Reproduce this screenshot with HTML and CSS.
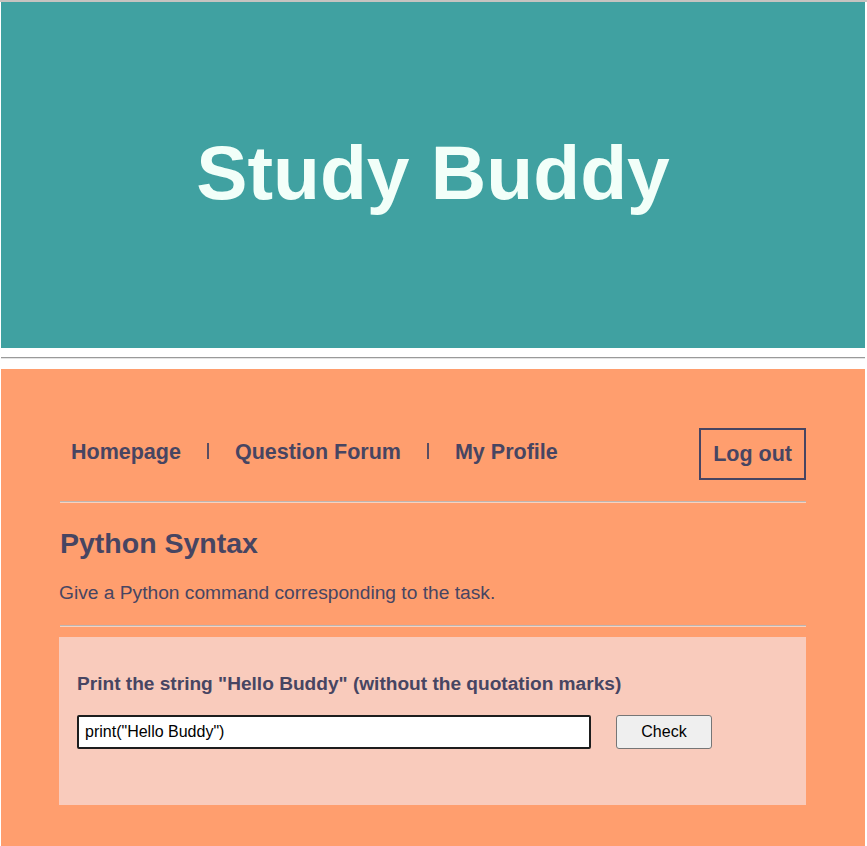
FILE: index.html
```html
<!DOCTYPE html>
<html lang="en">
<head>
<meta charset="utf-8">
<title>Study Buddy</title>
<link rel="stylesheet" href="styles.css">
</head>
<body>
<div class="frame">
  <header class="hero">
    <h1 class="hero-title">Study Buddy</h1>
  </header>
  <hr class="divider">
  <main class="panel">
    <nav class="nav">
      <ul class="links">
        <li><a class="link" href="#">Homepage</a></li>
        <li class="sep" aria-hidden="true"></li>
        <li><a class="link" href="#">Question Forum</a></li>
        <li class="sep" aria-hidden="true"></li>
        <li><a class="link" href="#">My Profile</a></li>
      </ul>
      <button class="logout" type="button">Log out</button>
    </nav>
    <hr class="rule rule-nav">
    <h2 class="title">Python Syntax</h2>
    <p class="intro">Give a Python command corresponding to the task.</p>
    <hr class="rule rule-intro">
    <section class="task">
      <p class="question">Print the string "Hello Buddy" (without the quotation marks)</p>
      <div class="answer">
        <input class="answer-input" type="text" value='print("Hello Buddy")'>
        <button class="check" type="button">Check</button>
      </div>
    </section>
  </main>
</div>
</body>
</html>
```

FILE: styles.css
```css
html, body {
  margin: 0;
  padding: 0;
  background: #ffffff;
}

body {
  font-family: "Liberation Sans", Arial, sans-serif;
  color: #474562;
}

.frame {
  border-top: 2px solid #c6c3c0;
  padding: 0 2px 0 1px;
  min-height: 844px;
  display: flex;
  flex-direction: column;
}

.hero {
  background: #40a1a1;
  height: 346px;
  display: flex;
  align-items: center;
  justify-content: center;
}

.hero-title {
  margin: 0;
  font-size: 76.8px;
  font-weight: 700;
  color: #f2fff9;
  line-height: 1;
  padding-bottom: 5px;
}

.divider {
  margin: 9px 0 10px;
  height: 0;
  border: 0;
  border-top: 1px solid #9a9a9a;
  border-bottom: 1px solid #e4e4e4;
}

.panel {
  flex: 1;
  background: #ff9e6e;
  padding: 59px 59px 40px 58px;
}

.nav {
  display: flex;
  align-items: center;
  justify-content: space-between;
}

.links {
  list-style: none;
  margin: 0;
  padding: 0 0 4px 12px;
  display: flex;
  align-items: center;
}

.link {
  font-size: 21.5px;
  font-weight: 700;
  color: #474562;
  text-decoration: none;
}

.sep {
  width: 2px;
  height: 16px;
  background: #5a4d62;
  margin: 0 26px 2px 26px;
}

.logout {
  font-family: inherit;
  font-size: 21.5px;
  font-weight: 700;
  color: #474562;
  background: transparent;
  border: 2px solid #474562;
  padding: 12px;
  line-height: 24px;
  border-radius: 0;
}

.rule {
  height: 0;
  border: 0;
  margin: 0 0 0 1px;
  border-top: 1px solid #bcb5b2;
  border-bottom: 1px solid #f6d2c0;
}

.rule-nav {
  margin-top: 21px;
}

.title {
  margin: 24px 0 0 1px;
  font-size: 28.5px;
  font-weight: 700;
  line-height: 33px;
}

.intro {
  margin: 22px 0 0;
  font-size: 19.2px;
  line-height: 22px;
}

.rule-intro {
  margin-top: 21px;
}

.task {
  margin-top: 10px;
  background: #f9cbbc;
  padding: 36px 18px 56px;
}

.question {
  margin: 0;
  font-size: 19.1px;
  font-weight: 700;
  line-height: 22px;
}

.answer {
  margin-top: 20px;
  display: flex;
  align-items: center;
  gap: 25px;
}

.answer-input {
  width: 514px;
  height: 34px;
  box-sizing: border-box;
  border: 2px solid #1d1d1d;
  border-radius: 2px;
  padding: 0 6px;
  font-family: "Liberation Sans", Arial, sans-serif;
  font-size: 16px;
  color: #000000;
  background: #ffffff;
  outline: none;
}

.check {
  width: 96px;
  height: 34px;
  box-sizing: border-box;
  border: 1px solid #767676;
  border-radius: 3px;
  background: #efefef;
  font-family: "Liberation Sans", Arial, sans-serif;
  font-size: 16px;
  color: #000000;
  padding: 0;
}
```
